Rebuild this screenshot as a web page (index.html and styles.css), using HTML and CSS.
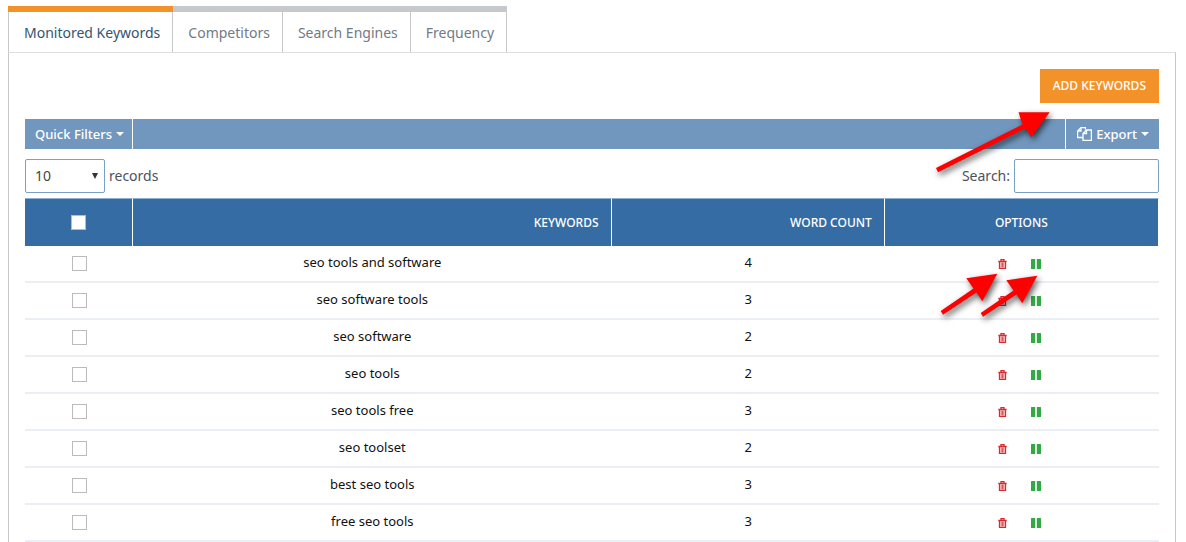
FILE: index.html
```html
<!DOCTYPE html>
<html lang="en">
<head>
<meta charset="utf-8">
<meta name="viewport" content="width=device-width, initial-scale=1">
<title>Monitored Keywords</title>
<link rel="stylesheet" href="styles.css">
<script src="app.js" defer></script>
</head>
<body>
<svg class="sprite" aria-hidden="true">
  <symbol id="trash" viewBox="0 0 9 10"><path d="M3 2V.6h3V2M.3 2.500h8.400M1.500 2.500V9.400h6V2.500" fill="none" stroke="currentColor" stroke-width="1.300"/><path d="M3.200 3.500v5M4.500 3.500v5M5.800 3.500v5" stroke="currentColor" stroke-width=".8"/></symbol>
  <symbol id="pause" viewBox="0 0 10 10"><rect width="4.200" height="10" rx=".5"/><rect x="5.800" width="4.200" height="10" rx=".5"/></symbol>
</svg>
<main class="page">
  <nav class="tabs">
    <a class="tab tab-active" href="#keywords">Monitored Keywords</a>
    <a class="tab" href="#competitors">Competitors</a>
    <a class="tab" href="#engines">Search Engines</a>
    <a class="tab" href="#frequency">Frequency</a>
  </nav>
  <section class="panel">
    <div class="actions"><button class="add" type="button">ADD KEYWORDS</button></div>
    <div class="toolbar">
      <button class="tool tool-left" type="button">Quick Filters <span class="caret"></span></button>
      <button class="tool tool-right" type="button">
        <svg class="copy" viewBox="0 0 15 14" fill="none" stroke="currentColor" stroke-width="1.300"><path d="M5.500 10.500H.6V4L4 .6h4.400v2M4 .6V4H.6M6 13.400V6.500l3.500-3.500h4.900v10.400zM9.500 3v3.500H6"/></svg>
        Export <span class="caret"></span>
      </button>
    </div>
    <div class="controls">
      <label class="length"><span class="select-box"><select class="select"><option>10</option><option>25</option><option>50</option></select></span>records</label>
      <label class="search">Search:<input class="search-input" type="text"></label>
    </div>
    <table class="grid">
      <colgroup><col class="col-check"><col class="col-keyword"><col class="col-count"><col class="col-options"></colgroup>
      <thead>
        <tr>
          <th class="center"><input class="check" type="checkbox" aria-label="Select all"></th>
          <th>KEYWORDS</th>
          <th>WORD COUNT</th>
          <th class="center">OPTIONS</th>
        </tr>
      </thead>
      <tbody id="rows"></tbody>
    </table>
  </section>
  <svg class="arrows" width="1186" height="542" fill="#f00" aria-hidden="true">
    <path d="M936 168 1022.500 124.500 1018.500 112.300H1049.700L1031.300 137.300 1025.500 128.500 938 172.300z"/>
    <path id="short-arrow" d="M940.700 311 973.500 288.500 966.300 278.300 997.300 273.700 982.300 301.300 976.500 292.500 943 314.700z"/>
    <use href="#short-arrow" x="40" y="2"/>
  </svg>
</main>
</body>
</html>
```
FILE: styles.css
```css
* { box-sizing: border-box; }
body {
  margin: 0;
  background: #fff;
  color: #4b525c;
  font: 14px/20px "Noto Sans", "Open Sans", sans-serif;
}
button, input, select { font: inherit; }
.sprite { position: absolute; width: 0; height: 0; }
.page {
  display: flex;
  flex-direction: column;
  height: 100vh;
  overflow: hidden;
  padding: 6px 10px 0 8px;
}
.tabs { display: flex; flex: none; }
.tab {
  padding: 11px 12px 9px 15px;
  border-top: 6px solid #c5c9cc;
  border-right: 1px solid #c5c9cc;
  color: #737a84;
  text-decoration: none;
}
.tab-active {
  margin-bottom: -1px;
  padding-bottom: 10px;
  border-left: 1px solid #c5c9cc;
  background: #fff;
  color: #34556f;
  border-image: linear-gradient(#f39229 6px, #c5c9cc 6px) 6 1 0 1;
}
.panel {
  flex: 1;
  padding: 16px;
  border: 1px solid #c5c9cc;
  border-top-color: #dedede;
  border-bottom: 0;
}
.actions { display: flex; justify-content: flex-end; margin-bottom: 16px; }
.add {
  height: 34px;
  padding: 0 13px;
  border: 0;
  background: #f39229;
  color: #fff;
  font-size: 12px;
  font-weight: 500;
}
.toolbar {
  display: flex;
  justify-content: space-between;
  height: 30px;
  margin-bottom: 10px;
  background: #7197bf;
}
.tool {
  display: flex;
  align-items: center;
  gap: 4px;
  border: 0;
  background: none;
  color: #fff;
  font-size: 13px;
  font-weight: 500;
}
.tool-left { padding: 0 8px 0 10px; border-right: 1px solid #fff; }
.tool-right { padding: 0 10px 0 11px; border-left: 1px solid #fff; }
.caret { border: 4px solid transparent; border-top-color: #fff; border-bottom: 0; }
.copy { width: 15px; height: 14px; }
.controls { display: flex; justify-content: space-between; margin-bottom: 5px; }
.length, .search { display: flex; align-items: center; gap: 4px; }
.select-box { position: relative; display: flex; }
.select-box::after {
  content: "";
  position: absolute;
  top: 14px;
  right: 7px;
  border: 3px solid transparent;
  border-top: 6px solid #333;
  border-bottom: 0;
  pointer-events: none;
}
.select, .search-input {
  height: 34px;
  border: 1px solid #7ba0c8;
  border-radius: 2px;
  background: #fff;
  color: #444;
}
.select { width: 80px; padding: 0 9px; appearance: none; }
.search-input { width: 145px; padding: 0 8px; }
.grid { width: 100%; border-collapse: separate; border-spacing: 0; table-layout: fixed; }
.col-check { width: 108px; }
.col-keyword { width: 42.2%; }
.col-count { width: 24.1%; }
th {
  height: 48px;
  padding: 0 12px;
  border-top: 1px solid #8eafd0;
  border-right: 1px solid #fff;
  background: #366ca4;
  color: #fff;
  font-size: 12px;
  font-weight: 500;
  text-align: right;
}
th.center { text-align: center; }
td {
  height: 37px;
  padding: 0 0 4px;
  border-bottom: 2px solid #ebeff3;
  color: #111;
  font-size: 13px;
  text-align: center;
}
td:first-child { padding: 0; }
.check {
  display: block;
  width: 15px;
  height: 15px;
  margin: 0 auto;
  border: 1px solid #bbb;
  background: #fff;
  appearance: none;
}
.options { display: flex; justify-content: center; align-items: center; gap: 24px; padding: 5px 5px 0 0; }
.icon-button { display: flex; padding: 0; border: 0; background: none; }
.trash { width: 9px; height: 10px; color: #d92b2f; }
.pause { width: 10px; height: 10px; fill: #35a846; }
.arrows {
  position: absolute;
  top: 0;
  left: 0;
  pointer-events: none;
  filter: drop-shadow(2px 3px 3px rgba(0, 0, 0, .65));
}
```
FILE: app.js
```js
const keywords = [
  ["seo tools and software", 4],
  ["seo software tools", 3],
  ["seo software", 2],
  ["seo tools", 2],
  ["seo tools free", 3],
  ["seo toolset", 2],
  ["best seo tools", 3],
  ["free seo tools", 3],
];
document.getElementById("rows").innerHTML = keywords.map(([name, count]) => `
  <tr>
    <td><input class="check" type="checkbox" aria-label="Select ${name}"></td>
    <td>${name}</td>
    <td>${count}</td>
    <td><div class="options">
      <button class="icon-button" type="button" aria-label="Delete ${name}"><svg class="trash"><use href="#trash"/></svg></button>
      <button class="icon-button" type="button" aria-label="Pause ${name}"><svg class="pause"><use href="#pause"/></svg></button>
    </div></td>
  </tr>`).join("");
```
